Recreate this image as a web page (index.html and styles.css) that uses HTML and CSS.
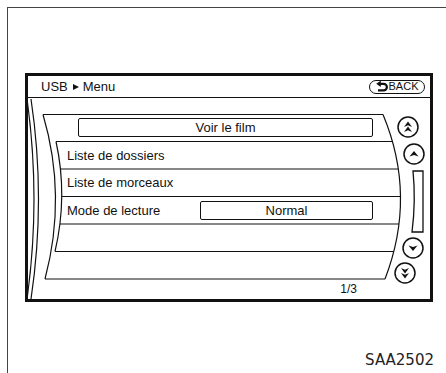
FILE: index.html
```html
<!DOCTYPE html>
<html lang="fr">
<head>
    <meta charset="UTF-8">
    <meta name="viewport" content="width=device-width, initial-scale=1.0">
    <title>USB Menu</title>
    <link rel="stylesheet" href="styles.css">
</head>
<body>
    <div class="sheet">
        <div class="screen">
            <!-- Top bar -->
            <div class="screen-head">
                <span class="crumb">USB<span class="crumb-arrow"></span>Menu</span>
                <span class="back-btn">
                    <svg class="back-icon" width="12" height="11" viewBox="0 0 12 11">
                        <path d="M4 2.8 H7.6 A3.3 3.3 0 0 1 7.6 9.4 H2" fill="none" stroke="#111" stroke-width="2.2"/>
                        <path d="M0.2 2.8 L4.8 -0.4 L4.8 6 Z" fill="#111"/>
                    </svg>BACK
                </span>
            </div>

            <!-- Curved list panel -->
            <div class="screen-body">
                <svg class="panel-art" width="402" height="201" viewBox="28 98 402 201">
                    <g fill="none" stroke="#111" stroke-width="1.2">
                        <path d="M27 99 Q41 199 27 299"/>
                        <path d="M31 99 Q46 199 31 299"/>
                        <path d="M43 114.5 Q67 196 45 279"/>
                        <path d="M56 141.5 Q68 196 55 251.5"/>
                        <path d="M383 114.5 Q417 196 385 279"/>
                        <path d="M43 114.5 H383"/>
                        <path d="M56 141.5 H392.5"/>
                        <path d="M60.5 169 H398.3"/>
                        <path d="M61.8 196.5 H400.5"/>
                        <path d="M60 224 H399"/>
                        <path d="M55 251.5 H393.8"/>
                        <path d="M45 279 H385"/>
                    </g>
                    <!-- scroll controls -->
                    <g fill="#fff" stroke="#111" stroke-width="1.5">
                        <circle cx="408" cy="127" r="10"/>
                        <circle cx="414" cy="154" r="10"/>
                        <path d="M413 171 H423 V232 H412 Q416 201 413 171 Z" stroke-width="1.3"/>
                        <circle cx="413" cy="248" r="10"/>
                        <circle cx="405" cy="273" r="10"/>
                    </g>
                    <g fill="#111">
                        <path d="M-4 2.5 L0 -3 L4 2.5 L0 0.8 Z" transform="translate(408 124.5)"/>
                        <path d="M-4 2.5 L0 -3 L4 2.5 L0 0.8 Z" transform="translate(408 129.5)"/>
                        <path d="M-4.5 2.5 L0 -3 L4.5 2.5 L0 1 Z" transform="translate(414 154)"/>
                        <path d="M-4.5 -2.5 L0 3 L4.5 -2.5 L0 -1 Z" transform="translate(413 248)"/>
                        <path d="M-4 -2.5 L0 3 L4 -2.5 L0 -0.8 Z" transform="translate(405 270.5)"/>
                        <path d="M-4 -2.5 L0 3 L4 -2.5 L0 -0.8 Z" transform="translate(405 275.5)"/>
                    </g>
                </svg>

                <ul class="menu-list">
                    <li class="menu-row selected"><span class="pill wide">Voir le film</span></li>
                    <li class="menu-row">Liste de dossiers</li>
                    <li class="menu-row">Liste de morceaux</li>
                    <li class="menu-row split"><span>Mode de lecture</span><span class="pill mode">Normal</span></li>
                    <li class="menu-row"></li>
                    <li class="menu-row"></li>
                </ul>
                <div class="page-count">1/3</div>
            </div>
        </div>

        <div class="fig-id">SAA2502</div>
    </div>
</body>
</html>
```

FILE: styles.css
```css
/* Reset */
* {
    margin: 0;
    padding: 0;
    box-sizing: border-box;
}

body {
    width: 446px;
    height: 373px;
    overflow: hidden;
    background: #fff;
    color: #111;
    font-family: "Liberation Sans", Arial, sans-serif;
}

/* Page frame */
.sheet {
    margin: 7px 0 0 7px;
    height: 366px;
    border-left: 1px solid #444;
    border-top: 1px solid #444;
    display: flex;
    flex-direction: column;
}

/* Screen */
.screen {
    margin: 65px 0 0 17px;
    width: 408px;
    height: 229px;
    border: 3px solid #111;
    display: flex;
    flex-direction: column;
}

.screen-head {
    height: 22px;
    border-bottom: 1px solid #111;
    display: flex;
    align-items: center;
    justify-content: space-between;
    padding: 0 5px 0 13px;
    font-size: 13px;
}

.crumb {
    display: flex;
    align-items: center;
}

.crumb-arrow {
    width: 0;
    height: 0;
    margin: 1px 4px 0 5px;
    border-left: 6px solid #111;
    border-top: 3.5px solid transparent;
    border-bottom: 3.5px solid transparent;
}

.back-btn {
    width: 56px;
    height: 14px;
    border: 1.5px solid #111;
    border-radius: 8px;
    display: flex;
    align-items: center;
    justify-content: center;
    gap: 1px;
    font-size: 11px;
    line-height: 1;
}

.back-icon {
    display: block;
}

/* List panel */
.screen-body {
    position: relative;
    flex: 1;
}

.panel-art {
    position: absolute;
    top: 0;
    left: 0;
}

.menu-list {
    position: relative;
    list-style: none;
    width: 345px;
    padding-top: 16px;
}

.menu-row {
    height: 27.5px;
    display: flex;
    align-items: center;
    padding-left: 39px;
    font-size: 13px;
}

.menu-row.selected {
    padding-left: 50px;
}

.menu-row.split {
    justify-content: space-between;
}

.pill {
    height: 19px;
    border: 1.5px solid #111;
    border-radius: 2px;
    background: #fff;
    display: flex;
    align-items: center;
    justify-content: center;
    font-size: 13px;
}

.pill.wide {
    width: 295px;
}

.pill.mode {
    width: 173px;
}

.page-count {
    position: relative;
    width: 329px;
    text-align: right;
    font-size: 12px;
    line-height: 20px;
}

/* Figure label */
.fig-id {
    margin-top: 51px;
    padding-right: 12px;
    text-align: right;
    font-family: "DejaVu Sans", sans-serif;
    font-size: 15px;
    line-height: 15px;
    color: #222;
}
```
